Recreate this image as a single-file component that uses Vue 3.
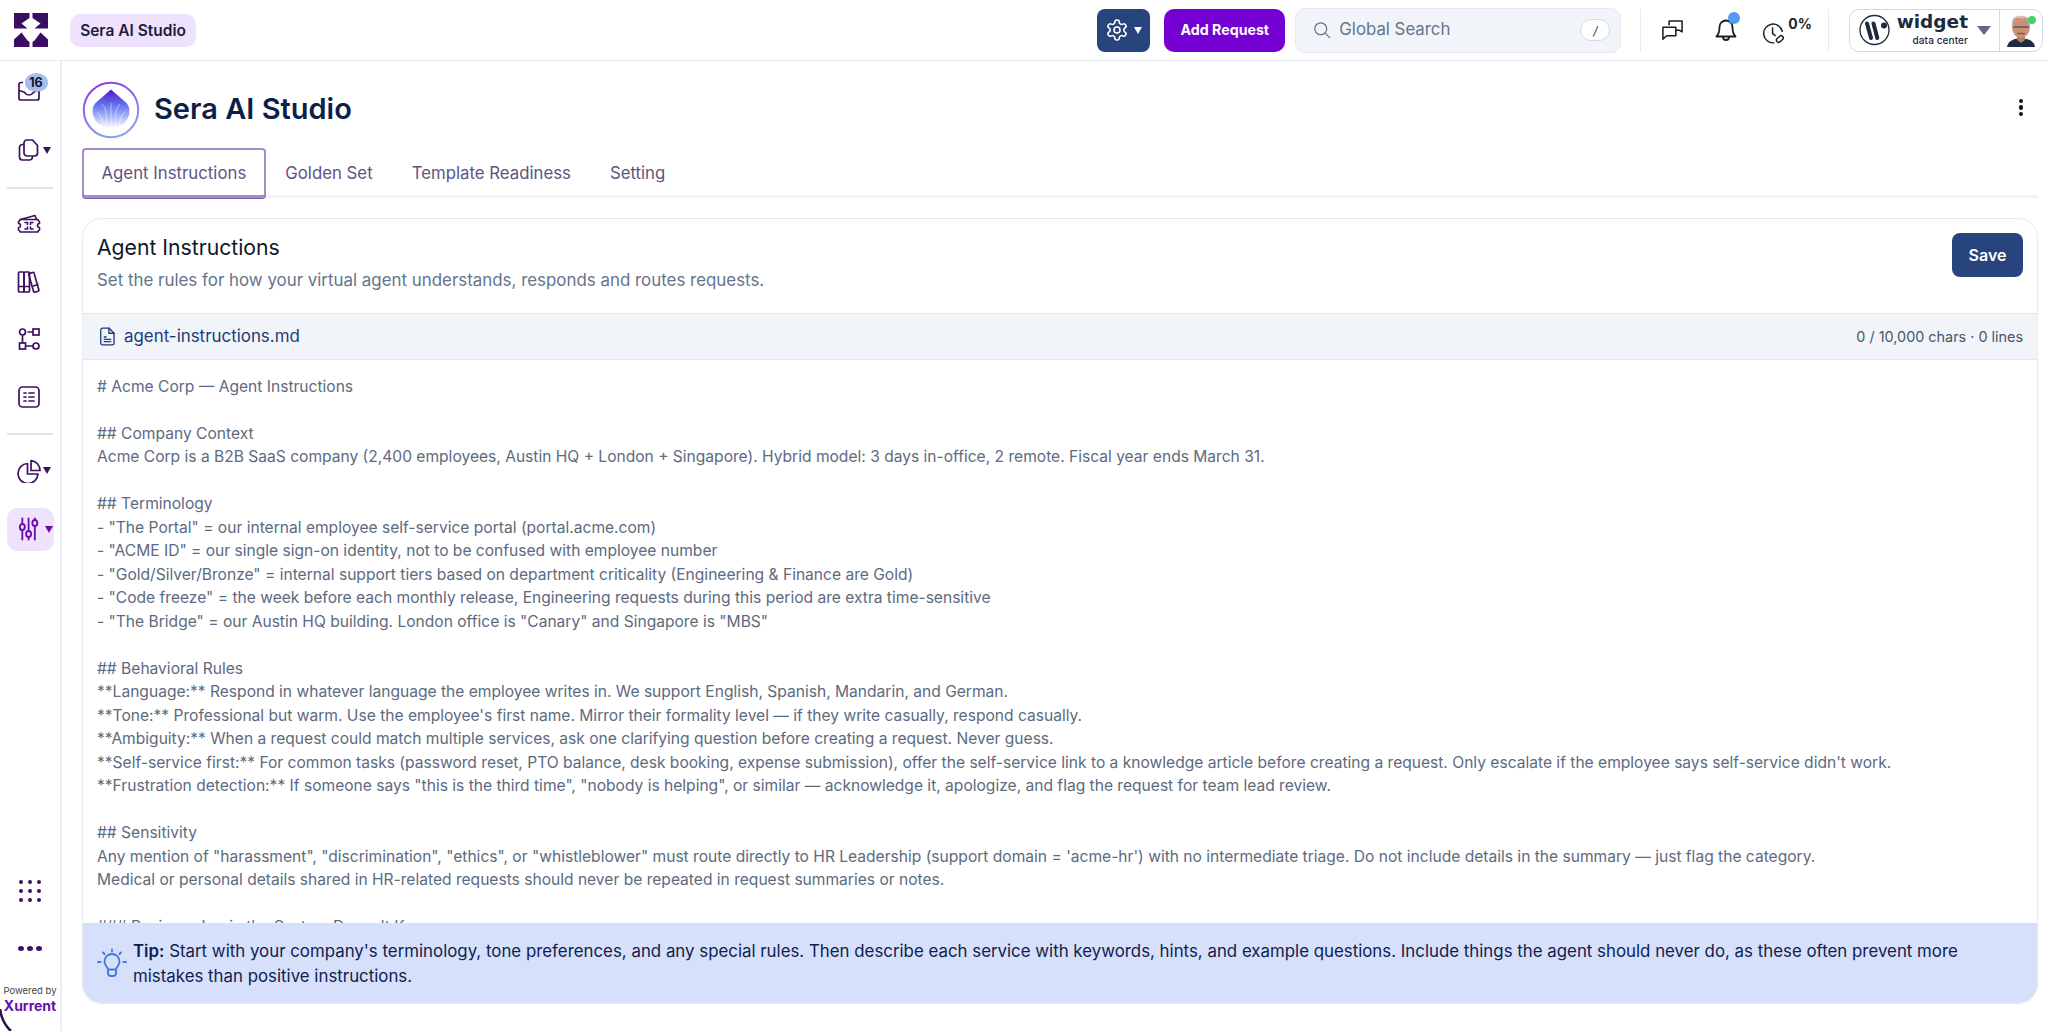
<script setup>
const doc = `# Acme Corp — Agent Instructions

## Company Context
Acme Corp is a B2B SaaS company (2,400 employees, Austin HQ + London + Singapore). Hybrid model: 3 days in-office, 2 remote. Fiscal year ends March 31.

## Terminology
- "The Portal" = our internal employee self-service portal (portal.acme.com)
- "ACME ID" = our single sign-on identity, not to be confused with employee number
- "Gold/Silver/Bronze" = internal support tiers based on department criticality (Engineering & Finance are Gold)
- "Code freeze" = the week before each monthly release, Engineering requests during this period are extra time-sensitive
- "The Bridge" = our Austin HQ building. London office is "Canary" and Singapore is "MBS"

## Behavioral Rules
**Language:** Respond in whatever language the employee writes in. We support English, Spanish, Mandarin, and German.
**Tone:** Professional but warm. Use the employee's first name. Mirror their formality level — if they write casually, respond casually.
**Ambiguity:** When a request could match multiple services, ask one clarifying question before creating a request. Never guess.
**Self-service first:** For common tasks (password reset, PTO balance, desk booking, expense submission), offer the self-service link to a knowledge article before creating a request. Only escalate if the employee says self-service didn't work.
**Frustration detection:** If someone says "this is the third time", "nobody is helping", or similar — acknowledge it, apologize, and flag the request for team lead review.

## Sensitivity
Any mention of "harassment", "discrimination", "ethics", or "whistleblower" must route directly to HR Leadership (support domain = 'acme-hr') with no intermediate triage. Do not include details in the summary — just flag the category.
Medical or personal details shared in HR-related requests should never be repeated in request summaries or notes.

### Business Logic the System Doesn't Know`
const tabs = ['Agent Instructions', 'Golden Set', 'Template Readiness', 'Setting']
</script>

<template>
  <div class="app">
    <header class="topbar">
      <svg class="logo" viewBox="0 0 34 34" fill="#3a0f63">
        <path d="M0 0H15.500V5L7.500 10.500 13.500 15.500 0 15.500Z" />
        <path d="M34 0H18.500V5L26.500 10.500 20.500 15.500 34 15.500Z" />
        <path d="M0 34V26.500L7.500 19.500 13.500 27.500 15.500 29V34Z" />
        <path d="M34 34V26.500L26.500 19.500 20.500 27.500 18.500 29V34Z" />
      </svg>
      <div class="pill">Sera AI Studio</div>
      <div class="top-right">
        <button class="gear-btn">
          <svg class="gear" viewBox="0 0 24 24" fill="none" stroke="#fff" stroke-width="1.6" stroke-linecap="round" stroke-linejoin="round">
            <path d="M12.22 2h-.44a2 2 0 0 0-2 2v.18a2 2 0 0 1-1 1.73l-.43.25a2 2 0 0 1-2 0l-.15-.08a2 2 0 0 0-2.73.73l-.22.38a2 2 0 0 0 .73 2.73l.15.1a2 2 0 0 1 1 1.72v.51a2 2 0 0 1-1 1.74l-.15.09a2 2 0 0 0-.73 2.73l.22.38a2 2 0 0 0 2.73.73l.15-.08a2 2 0 0 1 2 0l.43.25a2 2 0 0 1 1 1.73V20a2 2 0 0 0 2 2h.44a2 2 0 0 0 2-2v-.18a2 2 0 0 1 1-1.73l.43-.25a2 2 0 0 1 2 0l.15.08a2 2 0 0 0 2.73-.73l.22-.39a2 2 0 0 0-.73-2.73l-.15-.08a2 2 0 0 1-1-1.74v-.5a2 2 0 0 1 1-1.74l.15-.09a2 2 0 0 0 .73-2.73l-.22-.38a2 2 0 0 0-2.73-.73l-.15.08a2 2 0 0 1-2 0l-.43-.25a2 2 0 0 1-1-1.73V4a2 2 0 0 0-2-2z" />
            <circle cx="12" cy="12" r="3" />
          </svg>
          <span class="caret caret-white"></span>
        </button>
        <button class="add-btn">Add Request</button>
        <div class="search">
          <svg class="search-ico" viewBox="0 0 20 20" fill="none" stroke="#64748b" stroke-width="1.4" stroke-linecap="round">
            <circle cx="8.6" cy="8.6" r="6.6" />
            <path d="M13.5 13.5L18.5 18.5" />
          </svg>
          <span class="search-text">Global Search</span>
          <span class="kbd">/</span>
        </div>
        <div class="vsep"></div>
        <svg class="chat" viewBox="0 0 24 24" fill="none" stroke="#1c1c24" stroke-width="1.6" stroke-linejoin="round">
          <path d="M8.500 6.500V2H22V13.500L19.500 11.800H15.500" />
          <path d="M2 8.500H15.500V17.500H6L2 21Z" />
        </svg>
        <div class="bell-wrap">
          <svg class="bell" viewBox="0 0 24 26" fill="none" stroke="#1c1c24" stroke-width="1.8" stroke-linecap="round" stroke-linejoin="round">
            <path d="M5.500 10a6.500 6.500 0 0 1 13 0c0 6 1.500 8 3 9.500H2.500C4 18 5.500 16 5.500 10Z" />
            <path d="M9 20a3 3 0 0 0 6 0" />
          </svg>
          <span class="bell-dot"></span>
        </div>
        <div class="clock-wrap">
          <svg class="clock" viewBox="0 0 28 28" fill="none" stroke="#1c1c24" stroke-width="1.7" stroke-linecap="round" stroke-linejoin="round">
            <path d="M15 25.500A11 11 0 1 1 24.800 12" />
            <path d="M13.500 8v6.500l3 2.500" />
            <rect x="17.500" y="18.500" width="9" height="5" rx="2.500" transform="rotate(-42 22 21)" />
          </svg>
          <span class="pct">0%</span>
        </div>
        <div class="vsep vsep2"></div>
        <div class="account">
          <div class="brand">
            <svg class="w-mark" viewBox="0 0 32 32">
              <circle cx="15.500" cy="16" r="14.500" fill="none" stroke="#1e2a3e" stroke-width="1.300" />
              <path d="M8 9.500L12 24M14.500 9.500L18.300 24" stroke="#1e2a3e" stroke-width="4" stroke-linecap="round" />
              <circle cx="25" cy="11.500" r="3" fill="#1e2a3e" />
            </svg>
            <div class="brand-text">
              <span class="brand-name">widget</span>
              <span class="brand-sub">data center</span>
            </div>
            <span class="caret caret-slate"></span>
          </div>
          <div class="avatar-cell">
            <svg class="avatar" viewBox="0 0 28 32">
              <path d="M0 32C1 25 8 23.500 14 23.500S27 25 28 32Z" fill="#1e2a44" />
              <path d="M10 20h8v5l-4 3-4-3Z" fill="#b77a5f" />
              <ellipse cx="14" cy="12" rx="9" ry="11" fill="#c99278" />
              <path d="M5 13C4.500 6 6 2.500 9 1.500 7.500 4 6.500 8 7 13Z" fill="#b9aea6" />
              <path d="M23 13C23.500 6 22 2.500 19 1.500 20.500 4 21.500 8 21 13Z" fill="#b9aea6" />
              <path d="M9 1.800C11 .5 17 .5 19 1.800 17 4 11 4 9 1.800Z" fill="#ddbca8" />
              <path d="M6 12h16" stroke="#4f423e" stroke-width="1.200" />
              <path d="M10 18.500h8" stroke="#8e5545" stroke-width="1.500" />
            </svg>
            <span class="online"></span>
          </div>
        </div>
      </div>
    </header>

    <div class="body">
      <aside class="sidebar">
        <div class="nav-item nav-first">
          <svg class="ico" viewBox="0 0 24 24" fill="none" stroke="#3d1060" stroke-width="1.700" stroke-linejoin="round">
            <path d="M6 3.500H4a2 2 0 0 0-2 2V19a2 2 0 0 0 2 2h16a2 2 0 0 0 2-2V5.500" />
            <path d="M2 11.500l5 1.500c2 2.500 3 3 5 3s3-.5 5-3l5-1.500" />
          </svg>
          <span class="count">16</span>
        </div>
        <div class="nav-item nav-second">
          <svg class="ico" viewBox="0 0 24 24" fill="none" stroke="#3d1060" stroke-width="1.700" stroke-linejoin="round">
            <path d="M7 6.500H5.500a3 3 0 0 0-3 3V19a3 3 0 0 0 3 3h7a3 3 0 0 0 3-3v-1" />
            <path d="M7 5a3 3 0 0 1 3-3h5.500l5 5.500V15a3 3 0 0 1-3 3H10a3 3 0 0 1-3-3Z" />
          </svg>
          <span class="caret"></span>
        </div>
        <div class="nav-sep"></div>
        <div class="nav-item tight">
          <svg class="ico" viewBox="0 0 24 24" fill="none" stroke="#3d1060" stroke-width="1.600" stroke-linejoin="round" stroke-linecap="round">
            <path d="M3.500 7.500L18 3.500l1.500 4" />
            <path d="M3 7.500H21A2 2 0 0 0 22.500 9.500V11.500A2 2 0 0 0 22.500 15.500V18A2 2 0 0 0 21 20H3A2 2 0 0 0 1.500 18V15.500A2 2 0 0 0 1.500 11.500V9.500A2 2 0 0 0 3 7.500Z" />
            <path d="M8 10.500h2.500v2M16 10.500h-2.500v2M8 17h2.500v-2M16 17h-2.500v-2" />
          </svg>
        </div>
        <div class="nav-item">
          <svg class="ico" viewBox="0 0 24 24" fill="none" stroke="#3d1060" stroke-width="1.700" stroke-linejoin="round">
            <rect x="1.500" y="2" width="5.500" height="20" rx="1" />
            <rect x="7" y="2" width="5.500" height="20" rx="1" />
            <rect x="14" y="2.500" width="5.500" height="19.500" rx="1" transform="rotate(-16 17 12)" />
            <path d="M1.500 16.500h11M16 16l5.500-1.500" />
          </svg>
        </div>
        <div class="nav-item">
          <svg class="ico" viewBox="0 0 24 24" fill="none" stroke="#3d1060" stroke-width="1.700">
            <circle cx="5.500" cy="5" r="3" />
            <rect x="16" y="2" width="6" height="6" />
            <rect x="2.500" y="16" width="6" height="6" />
            <circle cx="19" cy="19" r="3" />
            <path d="M5.500 8v8M10.500 5H16M8.500 19H16" />
          </svg>
        </div>
        <div class="nav-item">
          <svg class="ico" viewBox="0 0 24 24" fill="none" stroke="#3d1060" stroke-width="1.700" stroke-linecap="round">
            <rect x="2" y="2" width="20" height="20" rx="3.500" />
            <path d="M7 8h2M12 8h5M7 12h2M12 12h5M7 16h2M12 16h5" />
          </svg>
        </div>
        <div class="nav-sep"></div>
        <div class="nav-item tight">
          <svg class="ico" viewBox="0 0 24 24" fill="none" stroke="#3d1060" stroke-width="1.700" stroke-linejoin="round">
            <path d="M10.500 4.500A10 10 0 1 0 21 15H10.500Z" />
            <path d="M14 1.500V11.500H23A10 10 0 0 0 14 1.500Z" />
          </svg>
          <span class="caret"></span>
        </div>
        <div class="nav-item active">
          <svg class="ico ico-slim" viewBox="0 0 24 24" preserveAspectRatio="none" fill="none" stroke="#6a0dad" stroke-width="2.200" stroke-linecap="round">
            <path d="M4 1.500v5M4 14v8.500M11.500 1.500V13M11.500 20.500v2M19 1.500v1M19 10v12.500" />
            <circle cx="4" cy="10" r="3" />
            <circle cx="11.500" cy="17" r="3" />
            <circle cx="19" cy="6" r="3" />
          </svg>
          <span class="caret caret-active"></span>
        </div>
        <div class="nav-grow"></div>
        <div class="dot-grid">
          <i v-for="n in 9" :key="n"></i>
        </div>
        <div class="dot-row"><i></i><i></i><i></i></div>
        <div class="powered">Powered by</div>
        <div class="xurrent">Xurrent</div>
        <svg class="arc" viewBox="0 0 12 22" fill="none" stroke="#2a0f3f" stroke-width="2.500">
          <path d="M0 0Q2 14 11 22" />
        </svg>
      </aside>

      <main class="main">
        <div class="title-row">
          <svg class="ai-mark" viewBox="0 0 58 58">
            <defs>
              <linearGradient id="ringGrad" x1="0.3" y1="0" x2="0.7" y2="1">
                <stop offset="0" stop-color="#8a3fe0" />
                <stop offset="1" stop-color="#8fa5f0" />
              </linearGradient>
              <linearGradient id="gemGrad" x1="0" y1="0" x2="0" y2="1">
                <stop offset="0" stop-color="#5a14d0" />
                <stop offset="0.38" stop-color="#5f6cec" />
                <stop offset="0.72" stop-color="#a8b4f8" />
                <stop offset="1" stop-color="#f5f6ff" />
              </linearGradient>
            </defs>
            <circle cx="29" cy="29" r="27.200" fill="#fff" stroke="url(#ringGrad)" stroke-width="2" />
            <path d="M29 8.500L44.500 22C51 29 46 45 34 46H24C12 45 7 29 13.500 22Z" fill="url(#gemGrad)" />
            <path d="M29 45V22M24 45C25 33 24 27 20 23M34 45C33 33 34 27 38 23M21 45C20 37 18 33 15 31M37 45C38 37 40 33 43 31" stroke="#fff" stroke-opacity="0.5" stroke-width="0.900" fill="none" />
          </svg>
          <h1 class="title">Sera AI Studio</h1>
          <div class="kebab"><i></i><i></i><i></i></div>
        </div>

        <nav class="tabs">
          <div v-for="(t, i) in tabs" :key="t" class="tab" :class="{ 'tab-on': i === 0 }">{{ t }}</div>
          <div class="tabs-line"></div>
        </nav>

        <section class="card">
          <div class="card-head">
            <div>
              <h2 class="card-title">Agent Instructions</h2>
              <p class="card-sub">Set the rules for how your virtual agent understands, responds and routes requests.</p>
            </div>
            <button class="save">Save</button>
          </div>
          <div class="filebar">
            <svg class="file-ico" viewBox="0 0 16 20" fill="none" stroke="#1e3a7b" stroke-width="1.400" stroke-linejoin="round" stroke-linecap="round">
              <path d="M2.800 1h6.700L15 6.500V17a2 2 0 0 1-2 2H2.800a2 2 0 0 1-2-2V3a2 2 0 0 1 2-2Z" />
              <path d="M9.500 1v5.500H15M4.500 10.500h2M4.500 13h7M4.500 15.500h7" />
            </svg>
            <span class="file-name">agent-instructions.md</span>
            <span class="file-meta">0 / 10,000 chars · 0 lines</span>
          </div>
          <div class="doc">{{ doc }}</div>
          <div class="tip">
            <svg class="tip-ico" viewBox="0 0 30 30" fill="none" stroke="#3f7be0" stroke-width="1.900" stroke-linecap="round">
              <path d="M15 1.500v2M6 4.500l1.500 1.500M24 4.500L22.500 6M1 14h2.500M26.500 14H29" />
              <path d="M11 21.500c0-2.500-3.500-3.500-3.500-8a7.500 7.500 0 0 1 15 0c0 4.500-3.500 5.500-3.500 8Z" stroke-linejoin="round" />
              <path d="M11 21.500v3.500a3 3 0 0 0 3 3h2a3 3 0 0 0 3-3v-3.500" />
            </svg>
            <p class="tip-text"><b>Tip:</b> Start with your company's terminology, tone preferences, and any special rules. Then describe each service with keywords, hints, and example questions. Include things the agent should never do, as these often prevent more mistakes than positive instructions.</p>
          </div>
        </section>
      </main>
    </div>
  </div>
</template>

<style>
html, body { margin: 0; padding: 0; background: #fff; overflow: hidden; }
</style>

<style scoped>
.app {
  width: 2048px;
  height: 1031px;
  display: flex;
  flex-direction: column;
  font-family: Inter, "Liberation Sans", sans-serif;
  overflow: hidden;
  background: #fff;
  color: #0f1f45;
}
.topbar {
  height: 60px;
  flex: none;
  box-sizing: content-box;
  border-bottom: 1px solid #e6e9f0;
  display: flex;
  align-items: center;
  padding-left: 14px;
  padding-right: 5px;
}
.logo { width: 34px; height: 34px; flex: none; }
.pill {
  margin-left: 22px;
  height: 33px;
  width: 126px;
  box-sizing: border-box;
  justify-content: center;
  display: flex;
  align-items: center;
  background: #efe2fd;
  border-radius: 10px;
  font-size: 15.500px;
  font-weight: 600;
  color: #1c1c3c;
  white-space: nowrap;
}
.top-right { margin-left: auto; display: flex; align-items: center; }
.gear-btn {
  width: 53px;
  height: 43px;
  border: 0;
  padding: 0 0 0 8px;
  border-radius: 8px;
  background: #27457c;
  display: flex;
  align-items: center;
  gap: 5px;
}
.gear { width: 24px; height: 24px; }
.caret {
  width: 0;
  height: 0;
  border-left: 4.500px solid transparent;
  border-right: 4.500px solid transparent;
  border-top: 7px solid #3d1060;
  flex: none;
}
.caret-white { border-top-color: #fff; }
.caret-slate { border-left-width: 7px; border-right-width: 7px; border-top: 9px solid #5e6a85; margin-left: 9px; }
.caret-active { border-top-color: #6a0dad; }
.add-btn {
  margin-left: 14px;
  width: 121px;
  height: 43px;
  border: 0;
  padding-bottom: 2px;
  border-radius: 10px;
  background: #7400d3;
  color: #fff;
  font: 700 14.200px Inter, sans-serif;
}
.search {
  margin-left: 10px;
  width: 326px;
  height: 45px;
  box-sizing: border-box;
  background: #f1f5f9;
  border: 1px solid #e6eaf0;
  border-radius: 10px;
  display: flex;
  align-items: center;
  padding-left: 17px;
}
.search-ico { width: 18px; height: 18px; flex: none; }
.search-text { margin-left: 8px; margin-top: -2px; font-size: 16.800px; color: #64748b; }
.kbd {
  margin-left: auto;
  margin-right: 10px;
  width: 30px;
  height: 22px;
  box-sizing: border-box;
  background: #fff;
  border: 1px solid #d5dae2;
  border-radius: 11px;
  font-size: 12px;
  font-style: italic;
  color: #333;
  display: flex;
  align-items: center;
  justify-content: center;
}
.vsep { width: 1px; height: 43px; background: #e6e9f0; margin-left: 19px; flex: none; }
.chat { width: 23px; height: 23px; margin-left: 20px; flex: none; }
.bell-wrap { position: relative; width: 24px; height: 26px; margin-left: 30px; flex: none; }
.bell { width: 24px; height: 26px; display: block; }
.bell-dot {
  position: absolute;
  right: -2px;
  top: -5px;
  width: 12px;
  height: 12px;
  border-radius: 50%;
  background: #559bf4;
}
.clock-wrap { display: flex; align-items: flex-start; margin-left: 23px; flex: none; }
.clock { width: 24px; height: 24px; margin-top: 5px; }
.pct { font-size: 14px; font-weight: 700; color: #24242c; margin-left: 3px; margin-top: -1px; }
.vsep2 { margin-left: 16px; }
.account {
  margin-left: 20px;
  width: 194px;
  height: 43px;
  box-sizing: border-box;
  border: 1px solid #d3d8e2;
  border-radius: 10px;
  display: flex;
  align-items: stretch;
}
.brand { flex: 1; display: flex; align-items: center; padding-left: 9px; }
.w-mark { width: 32px; height: 32px; flex: none; }
.brand-text { width: 72px; display: flex; flex-direction: column; align-items: flex-end; margin-left: 5px; }
.brand-name { font: 700 18.500px/22px "DejaVu Sans", sans-serif; color: #1e2a3e; margin-top: -3px; }
.brand-sub { font: 500 10px/12px Inter, sans-serif; letter-spacing: 0.1px; color: #1e2a3e; margin-top: 1px; white-space: nowrap; }
.avatar-cell {
  position: relative;
  width: 42px;
  border-left: 1px solid #d3d8e2;
  display: flex;
  align-items: flex-end;
  justify-content: center;
}
.avatar { width: 28px; height: 32px; margin-bottom: 4px; }
.online {
  position: absolute;
  top: 6px;
  right: 6px;
  width: 8px;
  height: 8px;
  border-radius: 50%;
  background: #42d46a;
}
.body { flex: 1; min-height: 0; display: flex; }
.sidebar {
  position: relative;
  width: 60px;
  flex: none;
  border-right: 2px solid #eceef5;
  display: flex;
  flex-direction: column;
  align-items: center;
  overflow: hidden;
}
.nav-item {
  position: relative;
  width: 47px;
  height: 43px;
  box-sizing: border-box;
  padding-left: 10.500px;
  margin-top: 14.500px;
  display: flex;
  align-items: center;
  gap: 2px;
  flex: none;
}
.nav-first { margin-top: 8px; }
.nav-second { margin-top: 16.500px; }
.tight { margin-top: 14px; }
.ico { width: 24px; height: 24px; flex: none; }
.ico-slim { width: 20px; margin-left: 2px; margin-right: 4px; }
.count {
  position: absolute;
  left: 18px;
  top: 4px;
  width: 23px;
  height: 19px;
  background: #a9bbef;
  border-radius: 50%;
  font-size: 12.500px;
  font-weight: 700;
  color: #101828;
  display: flex;
  align-items: center;
  justify-content: center;
}
.active { background: #efe2fd; border-radius: 11px; margin-top: 15.500px; }
.nav-sep { width: 46px; height: 2px; background: #dfe5ee; margin-top: 15px; flex: none; }
.nav-grow { flex: 1; }
.dot-grid {
  display: grid;
  grid-template-columns: repeat(3, 4px);
  gap: 5px;
  justify-content: center;
  margin-bottom: 44px;
}
.dot-grid i { width: 4px; height: 4px; border-radius: 50%; background: #3d1060; }
.dot-row { display: flex; gap: 3px; margin-bottom: 34px; }
.dot-row i { width: 6px; height: 5px; border-radius: 50%; background: #3d1060; }
.powered { font-size: 9.500px; color: #444; line-height: 12px; white-space: nowrap; }
.xurrent { font-size: 14px; font-weight: 700; color: #6a0dad; line-height: 17px; margin-bottom: 17px; }
.arc {
  position: absolute;
  left: 0;
  bottom: 0;
  width: 12px;
  height: 22px;
}
.main {
  flex: 1;
  min-width: 0;
  display: flex;
  flex-direction: column;
  padding: 20px 10px 27px 20px;
  box-sizing: border-box;
}
.title-row { display: flex; align-items: center; height: 57px; flex: none; }
.ai-mark { width: 58px; height: 58px; flex: none; }
.title { margin: -2px 0 0 14px; font-size: 29px; font-weight: 600; color: #0c1f4a; }
.kebab { margin-left: auto; margin-right: 15px; display: flex; flex-direction: column; gap: 2px; margin-top: -4px; }
.kebab i { width: 4.500px; height: 4.500px; border-radius: 50%; background: #111; }
.tabs { position: relative; display: flex; margin-top: 10px; height: 50px; flex: none; }
.tab {
  height: 50px;
  box-sizing: border-box;
  padding: 0 19.500px;
  display: flex;
  align-items: center;
  font-size: 16.800px;
  color: #5f5380;
  white-space: nowrap;
}
.tab-on {
  position: relative;
  z-index: 1;
  background: #fff;
  padding: 0 17.500px;
  border: 1px solid #a68cc8;
  border-width: 2px 2px 3px 2px;
  border-radius: 4px;
  box-shadow: 0 1px 0 #7b62a8;
}
.tabs-line {
  position: absolute;
  left: 0;
  right: 0;
  bottom: 0;
  height: 3px;
  background: #f1f3f7;
}
.card {
  flex: 1;
  min-height: 0;
  margin-top: 20px;
  border: 1px solid #e7e9ef;
  border-radius: 20px;
  display: flex;
  flex-direction: column;
  overflow: hidden;
}
.card-head {
  height: 94px;
  flex: none;
  box-sizing: border-box;
  padding: 13.500px 14px 0 14px;
  display: flex;
  justify-content: space-between;
  align-items: flex-start;
}
.card-title { margin: 0; font-size: 21.200px; font-weight: 400; line-height: 28px; color: #0f172a; }
.card-sub { margin: 7.500px 0 0; font-size: 16.900px; line-height: 24px; color: #64748b; }
.save {
  width: 71px;
  height: 44px;
  margin-top: 0.500px;
  border: 0;
  border-radius: 8px;
  background: #27457c;
  color: #fff;
  font: 600 16px Inter, sans-serif;
}
.filebar {
  height: 47px;
  flex: none;
  box-sizing: border-box;
  background: #f1f5f9;
  border-top: 1px solid #e2e8f0;
  border-bottom: 1px solid #e2e8f0;
  display: flex;
  align-items: center;
  padding: 0 14px 0 17px;
}
.file-ico { width: 15px; height: 19px; flex: none; }
.file-name { margin-left: 9px; margin-top: -1px; font-size: 16.900px; color: #1e3a7b; }
.file-meta { margin-left: auto; margin-top: -1px; font-size: 14.400px; color: #475569; }
.doc {
  flex: 1;
  min-height: 0;
  overflow: hidden;
  padding: 14.500px 14px 0 14px;
  font-size: 15.580px;
  line-height: 23.500px;
  white-space: pre-wrap;
  color: #5d6a80;
}
.tip {
  height: 80px;
  flex: none;
  box-sizing: border-box;
  background: #d6e0fb;
  display: flex;
  align-items: center;
  padding: 0 60px 0 14px;
}
.tip-ico { width: 30px; height: 30px; flex: none; margin-right: 6px; }
.tip-text { margin: 2px 0 0; font-size: 16.850px; line-height: 25px; color: #0f2050; }
.tip-text b { font-weight: 600; }
</style>
